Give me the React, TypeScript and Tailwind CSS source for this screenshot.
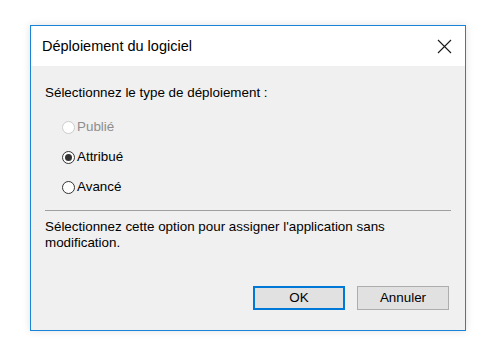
const Radio = ({ label, checked, disabled }: { label: string; checked?: boolean; disabled?: boolean }) => (
  <div className="flex h-[30px] items-center">
    <span
      className={`flex h-[13px] w-[13px] items-center justify-center rounded-full border bg-white ${
        disabled ? "border-[#cccccc]" : "border-[#333333]"
      }`}
    >
      {checked && <span className="h-[7px] w-[7px] rounded-full bg-[#333333]" />}
    </span>
    <span className={`ml-[2px] ${disabled ? "text-[#8d8d8d]" : "text-black"}`}>{label}</span>
  </div>
);

export default function App() {
  return (
    <div
      className="h-[355px] w-[500px] bg-white pl-[30px] pt-[25px] text-[13.4px] leading-[16px] text-black"
      style={{ fontFamily: '"Liberation Sans", Arial, sans-serif' }}
    >
      <div className="flex h-[306px] w-[436px] flex-col border border-[#1883d7] shadow-[0_0_8px_rgba(0,0,0,0.12)]">
        {/* title bar */}
        <div className="flex h-[40px] items-center justify-between bg-white pl-[11px] pr-[13px]">
          <span className="text-[14.5px]">Déploiement du logiciel</span>
          <svg width="15" height="15" viewBox="0 0 15 15" fill="none" stroke="#1a1a1a" strokeWidth="1.1">
            <path d="M1 1 L14 14 M14 1 L1 14" />
          </svg>
        </div>

        {/* body */}
        <div className="flex flex-1 flex-col bg-[#f0f0f0] px-[14px] pt-[19px]">
          <p>Sélectionnez le type de déploiement :</p>

          <div className="mt-[11px] flex flex-col pl-[17px]">
            <Radio label="Publié" disabled />
            <Radio label="Attribué" checked />
            <Radio label="Avancé" />
          </div>

          <div className="mt-[8px] h-px w-[406px] bg-[#a0a0a0]" />

          <p className="mt-[8px] w-[380px]">
            Sélectionnez cette option pour assigner l'application sans modification.
          </p>

          <div className="mt-auto mb-[20px] flex justify-end gap-[12px] pr-[2px]">
            <button className="h-[24px] w-[92px] border-2 border-[#0078d7] bg-[#e1e1e1]">OK</button>
            <button className="h-[24px] w-[92px] border border-[#adadad] bg-[#e1e1e1]">Annuler</button>
          </div>
        </div>
      </div>
    </div>
  );
}
